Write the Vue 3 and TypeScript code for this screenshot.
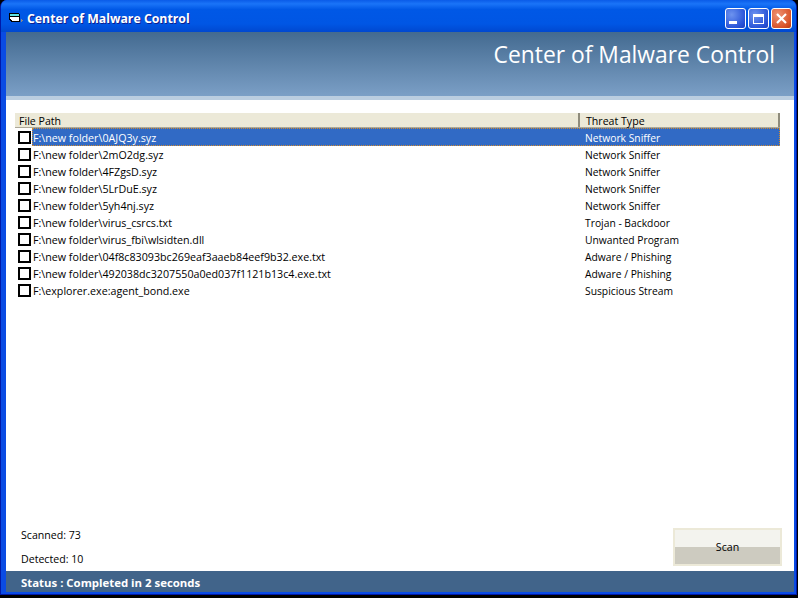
<script setup lang="ts">
interface Row { path: string; threat: string }
const rows: Row[] = [
  { path: 'F:\\new folder\\0AJQ3y.syz', threat: 'Network Sniffer' },
  { path: 'F:\\new folder\\2mO2dg.syz', threat: 'Network Sniffer' },
  { path: 'F:\\new folder\\4FZgsD.syz', threat: 'Network Sniffer' },
  { path: 'F:\\new folder\\5LrDuE.syz', threat: 'Network Sniffer' },
  { path: 'F:\\new folder\\5yh4nj.syz', threat: 'Network Sniffer' },
  { path: 'F:\\new folder\\virus_csrcs.txt', threat: 'Trojan - Backdoor' },
  { path: 'F:\\new folder\\virus_fbi\\wlsidten.dll', threat: 'Unwanted Program' },
  { path: 'F:\\new folder\\04f8c83093bc269eaf3aaeb84eef9b32.exe.txt', threat: 'Adware / Phishing' },
  { path: 'F:\\new folder\\492038dc3207550a0ed037f1121b13c4.exe.txt', threat: 'Adware / Phishing' },
  { path: 'F:\\explorer.exe:agent_bond.exe', threat: 'Suspicious Stream' },
]
</script>

<template>
  <div class="window">
    <div class="titlebar">
      <svg class="app-icon" width="14" height="12" viewBox="0 0 14 12" shape-rendering="crispEdges">
        <path d="M0 0h10v1h1v8H2V8H1V7H0z" fill="#000" />
        <path d="M1 1h9v2H1z" fill="#5fe3e3" />
        <path d="M1 4h9v4H3V7H2V6H1z" fill="#fff" />
        <path d="M12 6h1v1h1v1h-1v1h-1z" fill="#8a8a8a" />
      </svg>
      <span class="title">Center of Malware Control</span>
      <div class="controls">
        <button class="ctl blue" aria-label="Minimize"><span class="min-glyph"></span></button>
        <button class="ctl blue" aria-label="Maximize"><span class="max-glyph"></span></button>
        <button class="ctl red" aria-label="Close">
          <svg width="13" height="13" viewBox="0 0 13 13"><path d="M2 2l9 9M11 2l-9 9" stroke="#fff" stroke-width="2.2" /></svg>
        </button>
      </div>
    </div>
    <div class="client">
      <header class="banner">
        <h1>Center of Malware Control</h1>
      </header>
      <div class="banner-edge"></div>
      <main class="content">
        <div class="list">
          <div class="head">
            <div class="col-path">File Path</div>
            <div class="col-threat">Threat Type</div>
          </div>
          <div class="rows">
            <div v-for="(r, i) in rows" :key="r.path" class="row" :class="{ selected: i === 0 }">
              <span class="check"></span>
              <div class="cells">
                <span class="cell-path">{{ r.path }}</span>
                <span class="cell-threat">{{ r.threat }}</span>
              </div>
            </div>
          </div>
        </div>
        <div class="footer">
          <div class="stats">
            <div>Scanned: 73</div>
            <div>Detected: 10</div>
          </div>
          <button class="scan">Scan</button>
        </div>
      </main>
      <div class="status">Status : Completed in 2 seconds</div>
    </div>
  </div>
</template>

<style>
html, body { margin: 0; background: #000; }
</style>

<style scoped>
.window {
  width: 797px;
  height: 595px;
  display: flex;
  flex-direction: column;
  box-sizing: border-box;
  font-family: "Open Sans", "Noto Sans", sans-serif;
  font-size: 10.6px;
  color: #000;
  background: #0a4be4;
  border-left: 1px solid #0019a8;
  border-right: 1px solid #0019a8;
  border-bottom: 1px solid #0019a8;
  border-radius: 7px 7px 0 0;
  overflow: hidden;
}
.titlebar {
  height: 32px;
  flex: none;
  box-sizing: border-box;
  display: flex;
  align-items: center;
  padding: 5px 4px 0 8px;
  background: linear-gradient(#0a5be8 0%, #1a74f8 12%, #0058e6 30%, #0056e4 75%, #0048d0 100%);
}
.app-icon { margin-right: 4px; flex: none; }
.title {
  color: #fff;
  font: bold 12.3px "Open Sans", sans-serif;
  text-shadow: 1px 1px 0 #0f1f8f;
}
.controls { margin-left: auto; display: flex; gap: 2px; }
.ctl {
  width: 21px;
  height: 21px;
  padding: 0;
  border: 1px solid #fff;
  border-radius: 3px;
  display: flex;
  align-items: center;
  justify-content: center;
}
.blue { background: radial-gradient(circle at 30% 30%, #6d93ef, #2a55d8 70%, #1c3fc0); }
.red { background: radial-gradient(circle at 30% 30%, #ee9274, #d9542a 70%, #b83a12); }
.min-glyph { width: 8px; height: 3px; background: #fff; margin: 8px 6px 0 0; }
.max-glyph { width: 11px; height: 10px; border: 1px solid #fff; border-top-width: 3px; box-sizing: border-box; }
.client {
  flex: 1;
  min-height: 0;
  margin: 0 2px 2px 5px;
  display: flex;
  flex-direction: column;
  background: #fff;
}
.banner {
  height: 64px;
  flex: none;
  background: linear-gradient(#436a90, #7b9fc6);
  display: flex;
  justify-content: flex-end;
  box-sizing: border-box;
  padding: 6px 19px 0 0;
}
.banner h1 {
  margin: 0;
  color: #fff;
  font: 400 22.85px/34px "Open Sans", sans-serif;
}
.banner-edge { height: 4px; background: #bacde0; flex: none; }
.content {
  flex: 1;
  min-height: 0;
  display: flex;
  flex-direction: column;
  padding: 13px 14px 5px 9px;
}
.list { flex: 1; min-height: 0; }
.head {
  display: flex;
  height: 15px;
  box-sizing: border-box;
  background: #ece9d8;
  border-bottom: 1px solid #aca899;
  line-height: 17px;
}
.col-path { width: 565px; padding-left: 4px; border-right: 2px solid #8f8c7c; box-sizing: border-box; }
.col-threat { flex: 1; padding-left: 6px; border-right: 2px solid #8f8c7c; }
.rows { padding-top: 1px; }
.row {
  display: flex;
  align-items: center;
  height: 17px;
}
.check {
  width: 13px;
  height: 13px;
  box-sizing: border-box;
  border: 2px solid #000;
  flex: none;
  margin-left: 3px;
}
.cells {
  flex: 1;
  display: flex;
  align-items: center;
  height: 17px;
  margin-left: 1px;
  box-sizing: border-box;
}
.cell-path { width: 553px; flex: none; padding-left: 1px; box-sizing: border-box; font-size: 10.7px; }
.cell-threat { font-size: 10.3px; }
.selected .cells {
  align-self: flex-start;
  height: 18px;
  margin-top: -1px;
  padding-top: 1px;
  background: #316ac5;
  color: #fff;
  outline: 1px dotted #d08a30;
  outline-offset: -1px;
}
.footer { flex: none; display: flex; justify-content: space-between; align-items: flex-end; }
.stats { display: flex; flex-direction: column; gap: 10px; padding-left: 6px; line-height: 14px; }
.scan {
  width: 109px;
  height: 38px;
  margin-right: -2px;
  border: 2px solid #ece9d8;
  background: linear-gradient(#f3f3ee 50%, #cdcbc0 50%);
  font: inherit;
  padding: 0;
}
.status {
  height: 21px;
  flex: none;
  box-sizing: border-box;
  background: #41648a;
  color: #fff;
  font-weight: 700;
  font-size: 11.4px;
  padding: 2px 0 0 15px;
  line-height: 19px;
}
</style>
